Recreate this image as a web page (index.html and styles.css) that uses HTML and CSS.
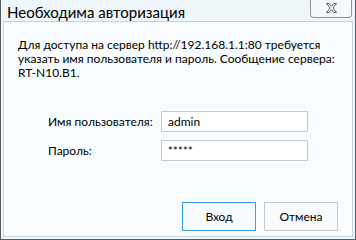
FILE: index.html
```html
<!DOCTYPE html>
<html>
<head>
<meta charset="utf-8">
<link rel="stylesheet" href="styles.css">
</head>
<body>
<div class="window">
  <div class="titlebar">
    <span class="title">Необходима авторизация</span>
    <div class="close">
      <svg width="13" height="10" viewBox="0 0 13 10"><path d="M1.5 0.5 H4 L6.5 3.3 L9 0.5 H11.5 L7.9 5 L11.5 9.5 H9 L6.5 6.7 L4 9.5 H1.5 L5.1 5 Z" fill="none" stroke="#555" stroke-width="1"/></svg>
    </div>
  </div>
  <div class="content">
    <p class="message">Для доступа на сервер http://192.168.1.1:80 требуется указать имя пользователя и пароль. Сообщение сервера: RT-N10.B1.</p>
    <div class="form">
      <label class="label">Имя пользователя:</label>
      <div class="input">admin</div>
      <label class="label">Пароль:</label>
      <div class="input pass">*****</div>
    </div>
    <div class="buttons">
      <div class="btn default">Вход</div>
      <div class="btn">Отмена</div>
    </div>
  </div>
</div>
</body>
</html>
```
FILE: styles.css
```css
html, body {
  margin: 0;
  padding: 0;
}
body {
  width: 356px;
  height: 240px;
  font-family: "Lato", "Open Sans", sans-serif;
  color: #000;
}
.window {
  box-sizing: border-box;
  width: 356px;
  height: 240px;
  background: #eef6fa;
  border-left: 1px solid #555b60;
  border-right: 1px solid #555b60;
  border-bottom: 1px solid #555b60;
  padding: 0 2px 2px 2px;
  display: flex;
  flex-direction: column;
}
.titlebar {
  height: 21px;
  display: flex;
  justify-content: space-between;
  align-items: flex-start;
}
.title {
  font-size: 15px;
  line-height: 20px;
  padding: 2px 0 0 4px;
  color: #000;
}
.close {
  box-sizing: border-box;
  width: 42px;
  height: 18px;
  margin-right: 1px;
  border: 1px solid #8d9499;
  border-top: none;
  border-radius: 0 0 4px 4px;
  background: #f5f9fb;
  display: flex;
  align-items: center;
  justify-content: center;
  padding-bottom: 1px;
}
.content {
  flex: 1;
  background: #f8fcfe;
  border: 1px solid #c3d2e0;
  padding: 16px 14px 0 14px;
  display: flex;
  flex-direction: column;
}
.message {
  margin: 0;
  font-size: 12px;
  line-height: 14px;
}
.form {
  display: grid;
  grid-template-columns: 113px 147px;
  row-gap: 8px;
  margin: 31px 0 0 30px;
  align-items: center;
}
.label {
  font-size: 12px;
  line-height: 14px;
}
.input {
  box-sizing: border-box;
  height: 21px;
  border: 1px solid #c6c9cc;
  background: #fff;
  font-size: 12px;
  line-height: 19px;
  padding-left: 6px;
}
.input.pass {
  font-size: 11px;
  letter-spacing: 0.3px;
}
.buttons {
  display: flex;
  justify-content: flex-end;
  gap: 8px;
  margin-top: 41px;
}
.btn {
  box-sizing: border-box;
  width: 74px;
  height: 29px;
  border: 1px solid #c8c8c8;
  background: #f8fbfd;
  font-size: 12px;
  display: flex;
  align-items: center;
  justify-content: center;
}
.btn.default {
  border-color: #3d9ee8;
}
```
